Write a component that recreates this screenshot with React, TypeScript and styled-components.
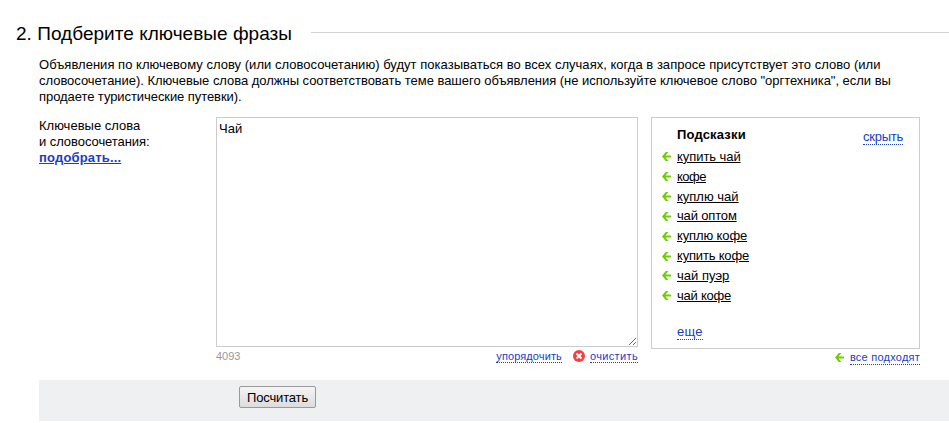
import React from 'react';
import styled, { createGlobalStyle } from 'styled-components';

const GlobalStyle = createGlobalStyle`
  * { box-sizing: border-box; }
  body {
    margin: 0;
    background: #fff;
    color: #000;
    font: 13px/16px "Liberation Sans", Arial, sans-serif;
    overflow: hidden;
  }
`;

const Page = styled.main`
  width: 949px;
  height: 423px;
  padding-top: 22px;
  overflow: hidden;
`;

const Heading = styled.header`
  display: flex;
  align-items: center;
  height: 22px;
  padding-left: 16px;
`;

const Title = styled.h2`
  flex: none;
  width: 295px;
  margin: 0;
  padding-top: 1px;
  font-size: 19px;
  line-height: 22px;
  font-weight: normal;
  letter-spacing: 0.03px;
  white-space: nowrap;
`;

const Rule = styled.div`
  flex: 1;
  height: 1px;
  margin-bottom: 1px;
  background: #d4d4d4;
`;

const Intro = styled.p`
  margin: 13px 0 0 39px;
`;

const Line = styled.span<{ $ls?: number }>`
  display: block;
  width: max-content;
  white-space: nowrap;
  letter-spacing: ${p => p.$ls ?? 0}px;
`;

const Form = styled.section`
  display: grid;
  grid-template-columns: 177px 422px 282px;
  height: 263px;
  margin: 12px 0 0 39px;
`;

const Label = styled.div`
  padding-top: 1px;
`;

const PickLink = styled.a`
  color: #1a3dc1;
  font-weight: bold;
  letter-spacing: 0.17px;
  text-decoration: underline;
`;

const Phrases = styled.div`
  width: 422px;
`;

const Area = styled.textarea`
  display: block;
  width: 422px;
  height: 230px;
  margin: 0;
  padding: 3px 2px;
  border: 1px solid #ccc;
  outline: 0;
  background: #fff;
  color: #000;
  font: 13px/16px "Liberation Sans", Arial, sans-serif;
`;

const Footer = styled.div`
  display: flex;
  align-items: flex-start;
  height: 20px;
  padding-top: 2px;
  font-size: 11px;
  line-height: 14px;
`;

const Counter = styled.span`
  margin-right: auto;
  color: #999;
`;

const Pseudo = styled.span<{ $h?: number; $ls?: number }>`
  height: ${p => p.$h ?? 14}px;
  border-bottom: 1px dotted #1a3dc1;
  color: #1a3dc1;
  white-space: nowrap;
  letter-spacing: ${p => p.$ls ?? 0}px;
`;

const ClearMark = styled.svg`
  width: 12px;
  height: 12px;
  margin: 1px 5px 0 11px;
`;

const HintsColumn = styled.div`
  width: 269px;
  margin-left: 13px;
`;

const HintsBox = styled.div`
  height: 232px;
  padding: 9px 16px 0 10px;
  border: 1px solid #ccc;
`;

const HintsHead = styled.div`
  display: flex;
  justify-content: space-between;
  height: 20px;
  padding-left: 15px;
`;

const HintsTitle = styled.b`
  letter-spacing: 0.17px;
`;

const HideSlot = styled.div`
  display: flex;
  padding-top: 2px;
`;

const HintList = styled.ul`
  margin: 0;
  padding: 0;
  list-style: none;
`;

const Hint = styled.li`
  display: flex;
  align-items: center;
  height: 19.85px;
`;

const HintLink = styled.a<{ $ls?: number }>`
  margin-left: 6px;
  text-decoration: underline;
  letter-spacing: ${p => p.$ls ?? 0}px;
`;

const MoreSlot = styled.div`
  display: flex;
  padding: 18px 0 0 15px;
`;

const ArrowMark = styled.svg`
  flex: none;
  width: 9px;
  height: 9px;
`;

const AllRow = styled.div`
  display: flex;
  align-items: center;
  justify-content: flex-end;
  gap: 6px;
  height: 17px;
  font-size: 11px;
  line-height: 14px;
`;

const ActionBar = styled.div`
  height: 41px;
  margin-left: 39px;
  padding: 6px 0 0 200px;
  background: #eff0f2;
`;

const Submit = styled.button`
  display: block;
  width: 77px;
  height: 22px;
  padding: 1px 0 0;
  border: 1px solid #999;
  border-radius: 2px;
  background: linear-gradient(#f5f5f5, #dcdcdc);
  color: #000;
  font: 13px/18px "Liberation Sans", Arial, sans-serif;
  letter-spacing: -0.15px;
`;

const Arrow = () => (
  <ArrowMark viewBox="0 0 9 9">
    <path d="M0 4.5L3.8 0H6.4L3.6 3.4H9V5.6H3.6L6.4 9H3.8Z" fill="#70ce00" />
  </ArrowMark>
);

const hints: [string, number][] = [
  ['купить чай', -0.06],
  ['кофе', -0.5],
  ['куплю чай', 0],
  ['чай оптом', -0.16],
  ['куплю кофе', -0.12],
  ['купить кофе', -0.18],
  ['чай пуэр', 0.03],
  ['чай кофе', -0.25],
];

export default function App() {
  return (
    <Page>
      <GlobalStyle />
      <Heading>
        <Title>2. Подберите ключевые фразы</Title>
        <Rule />
      </Heading>
      <Intro>
        <Line $ls={0.027}>Объявления по ключевому слову (или словосочетанию) будут показываться во всех случаях, когда в запросе присутствует это слово (или</Line>
        <Line $ls={-0.027}>словосочетание). Ключевые слова должны соответствовать теме вашего объявления (не используйте ключевое слово "оргтехника", если вы</Line>
        <Line $ls={-0.07}>продаете туристические путевки).</Line>
      </Intro>
      <Form>
        <Label>
          <Line>Ключевые слова</Line>
          <Line $ls={-0.06}>и словосочетания:</Line>
          <PickLink>подобрать...</PickLink>
        </Label>
        <Phrases>
          <Area defaultValue="Чай" spellCheck={false} />
          <Footer>
            <Counter>4093</Counter>
            <Pseudo $ls={0.1}>упорядочить</Pseudo>
            <ClearMark viewBox="0 0 12 12">
              <circle cx="6" cy="6" r="6" fill="#f53f3f" />
              <path d="M3.5 3.5L8.5 8.5M8.5 3.5L3.5 8.5" stroke="#fff" strokeWidth="2" />
            </ClearMark>
            <Pseudo $ls={0.36}>очистить</Pseudo>
          </Footer>
        </Phrases>
        <HintsColumn>
          <HintsBox>
            <HintsHead>
              <HintsTitle>Подсказки</HintsTitle>
              <HideSlot><Pseudo $h={16} $ls={-0.25}>скрыть</Pseudo></HideSlot>
            </HintsHead>
            <HintList>
              {hints.map(([text, ls]) => (
                <Hint key={text}><Arrow /><HintLink $ls={ls}>{text}</HintLink></Hint>
              ))}
            </HintList>
            <MoreSlot><Pseudo $h={16} $ls={0.2}>еще</Pseudo></MoreSlot>
          </HintsBox>
          <AllRow><Arrow /><Pseudo $h={15} $ls={0.23}>все подходят</Pseudo></AllRow>
        </HintsColumn>
      </Form>
      <ActionBar><Submit>Посчитать</Submit></ActionBar>
    </Page>
  );
}
